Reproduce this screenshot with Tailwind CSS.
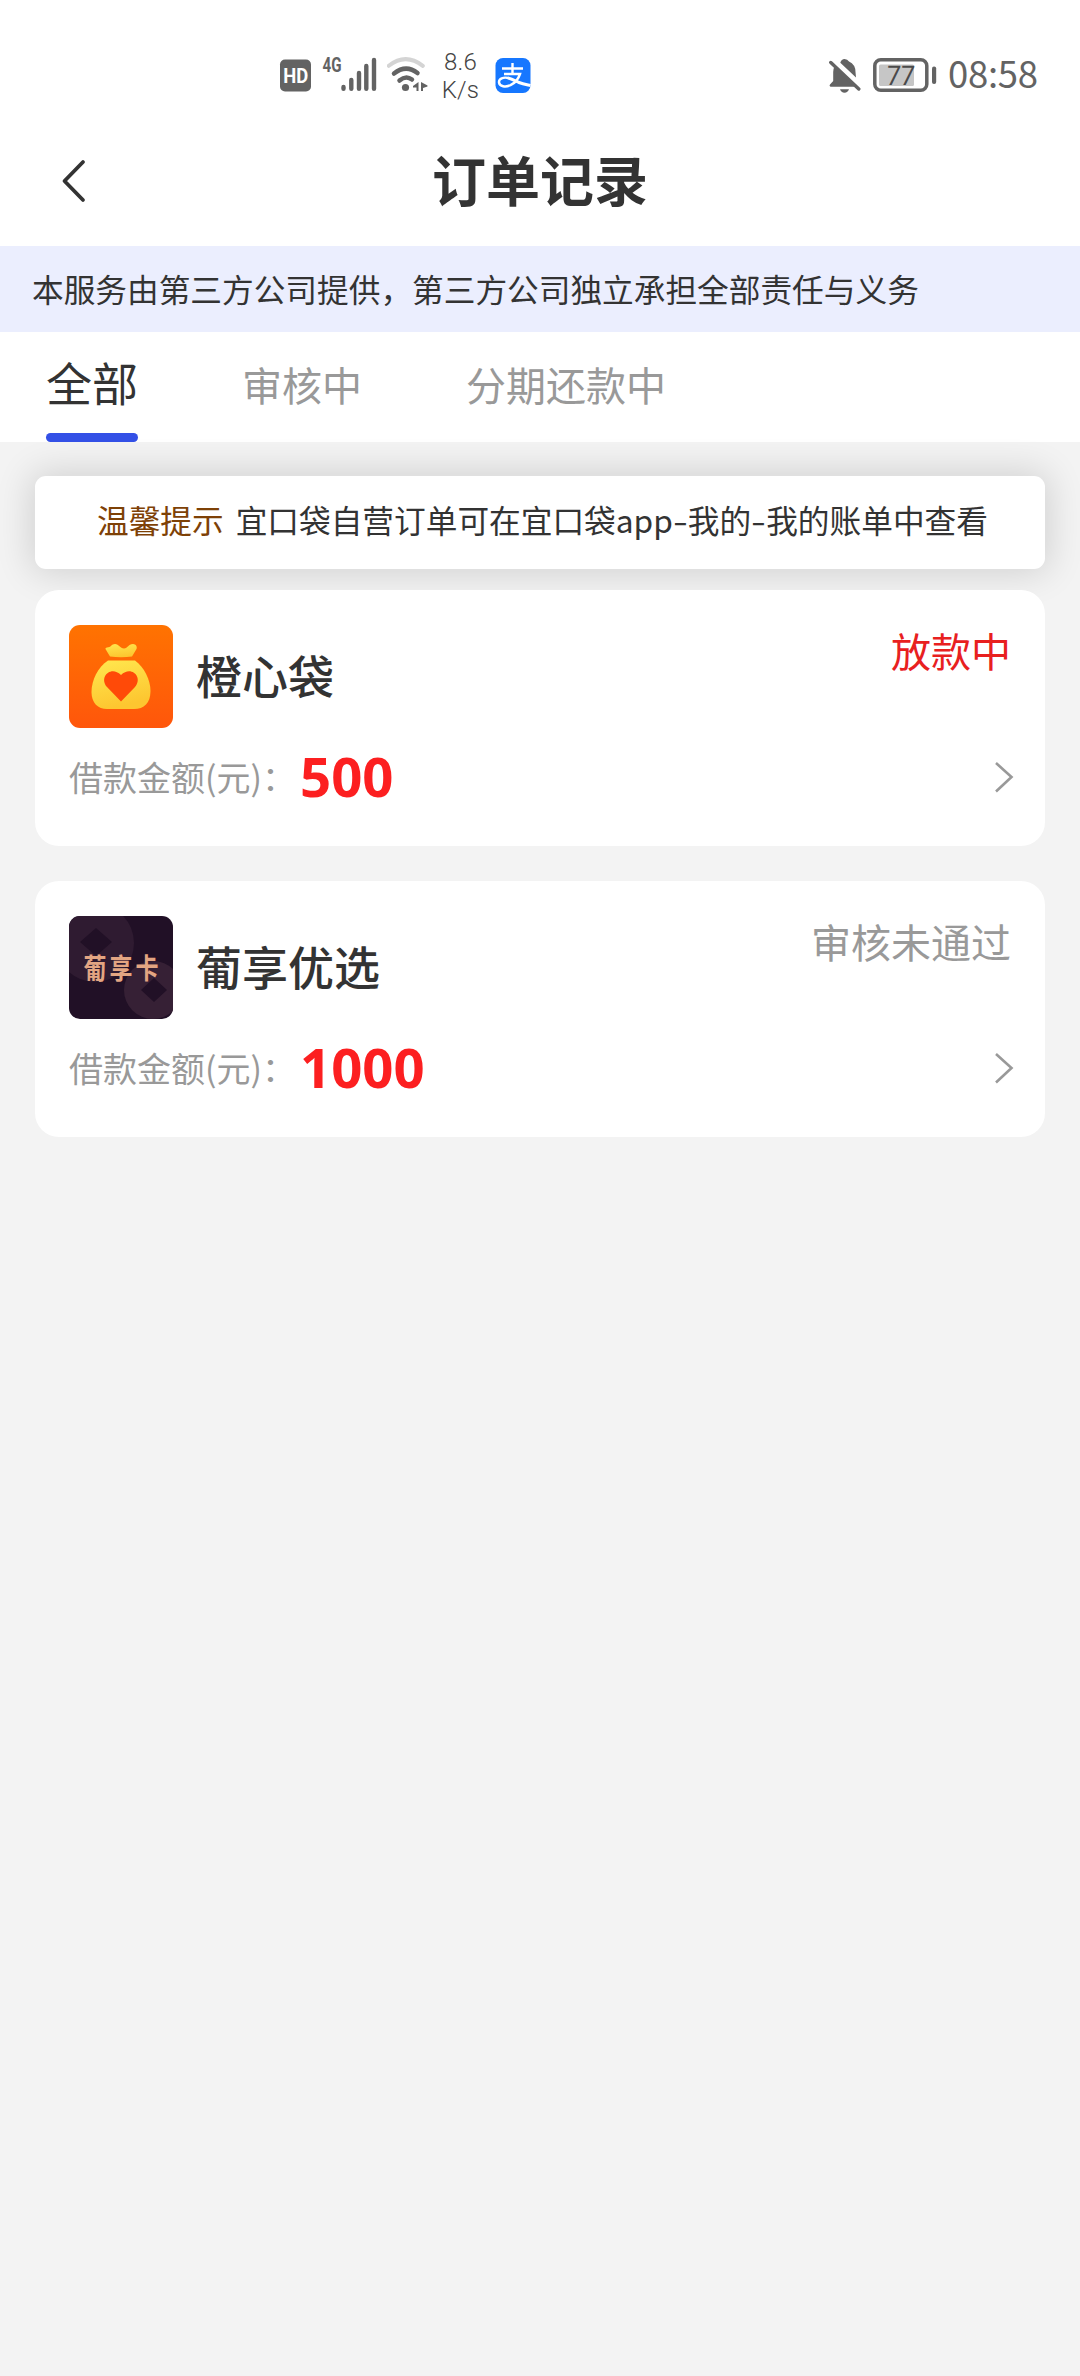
<!DOCTYPE html>
<html lang="zh-CN">
<head>
<meta charset="utf-8">
<title>订单记录</title>
<script src="https://cdn.jsdelivr.net/npm/@tailwindcss/browser@4"></script>
</head>
<body class="min-h-[2376px] w-[1080px] overflow-x-hidden bg-[#f3f3f3] font-['Noto_Sans_CJK_SC',sans-serif] text-[#333]">
  <header class="h-[246px] bg-white">
    <!-- System status bar -->
    <div class="flex h-[116px] items-start pl-[279px] text-[#636363]">
      <svg class="mt-[58px] h-[35px] w-[34px] shrink-0" viewBox="0 0 34 35">
        <rect x="1" y="1.500" width="31" height="32" rx="5" fill="#636363"/>
        <text x="16.800" y="25" text-anchor="middle" font-family="Roboto" font-weight="700" font-size="20" textLength="25" lengthAdjust="spacingAndGlyphs" fill="#fff">HD</text>
      </svg>
      <svg class="mt-[54px] ml-[9px] h-[40px] w-[56px] shrink-0" viewBox="0 0 56 40" fill="none">
        <text x="0.500" y="18" font-family="Roboto" font-weight="700" font-size="19.500" textLength="19" lengthAdjust="spacingAndGlyphs" fill="#636363">4G</text>
        <g stroke="#636363" stroke-width="4.400" stroke-linecap="round">
          <path d="M21.500 33v1.800M29.300 26v8.800M37 19v15.800M44.300 12v22.800M52 6v28.800"/>
        </g>
      </svg>
      <svg class="mt-[56px] ml-[9px] h-[38px] w-[42px] shrink-0" viewBox="0 0 42 38" fill="none" stroke-linecap="round">
        <path d="M1.800 9.800Q18.500-3.500 35.800 9.800" stroke="#d4d4d4" stroke-width="4"/>
        <path d="M7 17.500Q19 8 30.500 17" stroke="#636363" stroke-width="4.500"/>
        <path d="M12.500 24.500Q19 19 25 23.500" stroke="#636363" stroke-width="4.500"/>
        <circle cx="18.500" cy="31.500" r="3.600" fill="#636363"/>
        <path d="M31.500 26v9h-2v-3.500h-3.500v-1.500ZM34 26l6.500 3.500v1L36 32v3h-2Z" fill="#636363"/>
      </svg>
      <div class="mt-[48px] ml-[11px] w-[41px] text-center font-[Roboto] text-[24px] leading-[28px] font-light tracking-[0.2px] text-[#444]"><div>8.6</div><div>K/s</div></div>
      <svg class="mt-[58px] ml-[14px] h-[36px] w-[36px] shrink-0" viewBox="0 0 36 36" fill="none">
        <rect x="0.500" y="0" width="35" height="35" rx="7.500" fill="#1677ff"/>
        <g stroke="#fff" stroke-width="2.400">
          <path d="M7 10.500h21M17.500 5v11M9 16h16C23.500 20.500 20 25 15.500 27.200 10.500 29.500 4.500 28.500 4 24.500 3.600 20.500 8.500 18.800 13.500 20"/>
          <path d="M13 20c5 1.300 8 3.300 11 4.500 4 1.500 7 2 11.500 3" stroke-width="3"/>
        </g>
      </svg>
      <svg class="mt-[58px] ml-[297px] h-[36px] w-[33px] shrink-0" viewBox="0 0 33 36" fill="#636363">
        <path d="M12.300 4.700Q13.500 1 16.500 1T21 3.500Q27.500 6.500 27.500 14L28 19.500ZM12 31.300h9q-1.200 3.400-4.500 3.400T12 31.300Z"/>
        <path d="M6.300 9 27 28.700H2.500Q.8 28 2 26.500L5.200 23V14Q5.200 11 6.300 9Z"/>
        <path d="m2.800 4.500 28 26.500" stroke="#636363" stroke-width="3.400" stroke-linecap="round"/>
      </svg>
      <svg class="mt-[57px] ml-[12px] h-[36px] w-[64px] shrink-0" viewBox="0 0 64 36">
        <rect x="1.800" y="2.800" width="52" height="30.500" rx="6" fill="none" stroke="#636363" stroke-width="3.500"/>
        <rect x="6" y="7.500" width="35" height="21.500" rx="1.500" fill="#c6c6c6"/>
        <rect x="59" y="9.500" width="4.200" height="17.500" rx="2" fill="#636363"/>
        <text x="27.500" y="28.500" text-anchor="middle" font-family="Roboto" font-size="27" textLength="28" lengthAdjust="spacingAndGlyphs" fill="#4a4a4a" transform="skewX(-4)translate(1.500 0)">77</text>
      </svg>
      <div class="mt-[52px] ml-[11px] font-['Noto_Sans_CJK_SC'] text-[36.500px] leading-[42px] tracking-[-0.3px] text-[#636363]">08:58</div>
    </div>
    <!-- Navigation bar -->
    <div class="grid h-[130px] grid-cols-[200px_1fr_200px] items-center">
      <svg class="ml-[58px] h-[46px] w-[32px]" viewBox="0 0 32 46" fill="none" stroke="#333" stroke-width="3.800" stroke-linecap="round" stroke-linejoin="round"><path d="M25 4 6.500 23 25 42"/></svg>
      <h1 class="pb-[5px] text-center text-[54px] leading-[80px] font-bold">订单记录</h1>
    </div>
  </header>

  <div class="flex h-[86px] items-center bg-[#ebeefe] pl-[32px] text-[31.68px] whitespace-nowrap">本服务由第三方公司提供，第三方公司独立承担全部责任与义务</div>

  <nav class="flex h-[110px] items-start bg-white pl-[46px] text-[40px] leading-[60px] text-[#999]">
    <div class="flex h-full flex-col justify-between text-[46px] text-[#333]">
      <span class="pt-[19px]">全部</span>
      <i class="h-[9px] rounded-full bg-[#3350e6]"></i>
    </div>
    <span class="ml-[104px] pt-[22px]">审核中</span>
    <span class="ml-[104px] pt-[22px]">分期还款中</span>
  </nav>

  <main class="px-[35px] pt-[34px]">
    <div class="flex h-[93px] items-center rounded-[11px] bg-white pb-[6px] pl-[62px] text-[31.68px] whitespace-nowrap shadow-[0_0_36px_4px_rgba(0,0,0,0.14)]">
      <span class="text-[#7e4106]">温馨提示</span>
      <span class="ml-[12px]">宜口袋自营订单可在宜口袋app<i class="inline-block w-[15px] origin-left scale-x-[1.35] not-italic">-</i>我的<i class="inline-block w-[15px] origin-left scale-x-[1.35] not-italic">-</i>我的账单中查看</span>
    </div>

    <section class="relative mt-[21px] h-[256px] rounded-[24px] bg-white px-[34px] pt-[35px]">
      <div class="flex h-[103px] items-center">
        <svg class="h-[103px] w-[104px] shrink-0" viewBox="0 0 104 103">
          <defs>
            <linearGradient id="orange" x1="0" y1="0" x2="0" y2="1"><stop stop-color="#ff7301"/><stop offset="1" stop-color="#ff560b"/></linearGradient>
            <linearGradient id="gold" x1="0" y1="0" x2="0.300" y2="1"><stop stop-color="#ffe84f"/><stop offset="1" stop-color="#fdc630"/></linearGradient>
          </defs>
          <rect width="104" height="103" rx="11" fill="url(#orange)"/>
          <path d="M41 31.500 36.500 24Q36 22.500 38 22.500C42 22.500 42.500 19 46 19C50 19 51 23.500 55 23.500C59 23.500 59 19 64 19C67 19 68.500 22 67.500 24L63 31.500Q52 33 41 31.500Z" fill="url(#gold)"/>
          <path d="M39 35.500H66C75 42 81.500 55 81.500 66C81.500 78 75 84 65 84H38C29 84 22.500 78 22.500 67C22.500 55 29 42 39 35.500Z" fill="url(#gold)"/>
          <path d="M52 76.500 38 62C29.500 52 42 40 52 50C62 40 74.500 52 66 62Z" fill="#ff4a08"/>
        </svg>
        <h2 class="ml-[23px] pb-[6px] text-[46px] leading-[60px] font-medium">橙心袋</h2>
        <span class="-mt-[3px] ml-auto self-start text-[40px] leading-[56px] text-[#e8201f]">放款中</span>
      </div>
      <div class="mt-[15px] flex h-[68px] items-center">
        <span class="pb-[2px] text-[34px] text-[#999]">借款金额(元)：</span>
        <b class="ml-[4px] pb-[3px] font-['Noto_Sans'] text-[54.500px] leading-[68px] font-bold text-[#fc1f20]">500</b>
        <svg class="-mr-[4px] ml-auto h-[32px] w-[22px]" viewBox="0 0 22 32" fill="none" stroke="#999" stroke-width="2.600"><path d="m3 2 15.500 14L3 30.500"/></svg>
      </div>
    </section>

    <section class="mt-[35px] h-[256px] rounded-[24px] bg-white px-[34px] pt-[35px]">
      <div class="flex h-[103px] items-center">
        <div class="relative grid h-[103px] w-[104px] shrink-0 place-items-center overflow-hidden rounded-[11px] bg-[#211026]">
          <svg class="absolute inset-0 h-full w-full" viewBox="0 0 104 103">
            <circle cx="26" cy="27" r="39" fill="#2f1b31"/>
            <path d="m27 12 16 14-16 14-16-14Z" fill="#211026"/>
            <circle cx="84" cy="74" r="29" fill="#362035"/>
            <path d="m85 62 13 12-13 12-13-12Z" fill="#211026"/>
          </svg>
          <span class="relative scale-y-[1.250] pb-[2px] pl-[3px] text-[23px] leading-[30px] font-bold tracking-[3px] whitespace-nowrap text-[#e3a582]">葡享卡</span>
        </div>
        <h2 class="ml-[23px] pb-[6px] text-[46px] leading-[60px] font-medium">葡享优选</h2>
        <span class="-mt-[3px] ml-auto self-start text-[40px] leading-[56px] text-[#999]">审核未通过</span>
      </div>
      <div class="mt-[15px] flex h-[68px] items-center">
        <span class="pb-[2px] text-[34px] text-[#999]">借款金额(元)：</span>
        <b class="ml-[4px] pb-[3px] font-['Noto_Sans'] text-[54.500px] leading-[68px] font-bold text-[#fc1f20]">1000</b>
        <svg class="-mr-[4px] ml-auto h-[32px] w-[22px]" viewBox="0 0 22 32" fill="none" stroke="#999" stroke-width="2.600"><path d="m3 2 15.500 14L3 30.500"/></svg>
      </div>
    </section>
  </main>
</body>
</html>
